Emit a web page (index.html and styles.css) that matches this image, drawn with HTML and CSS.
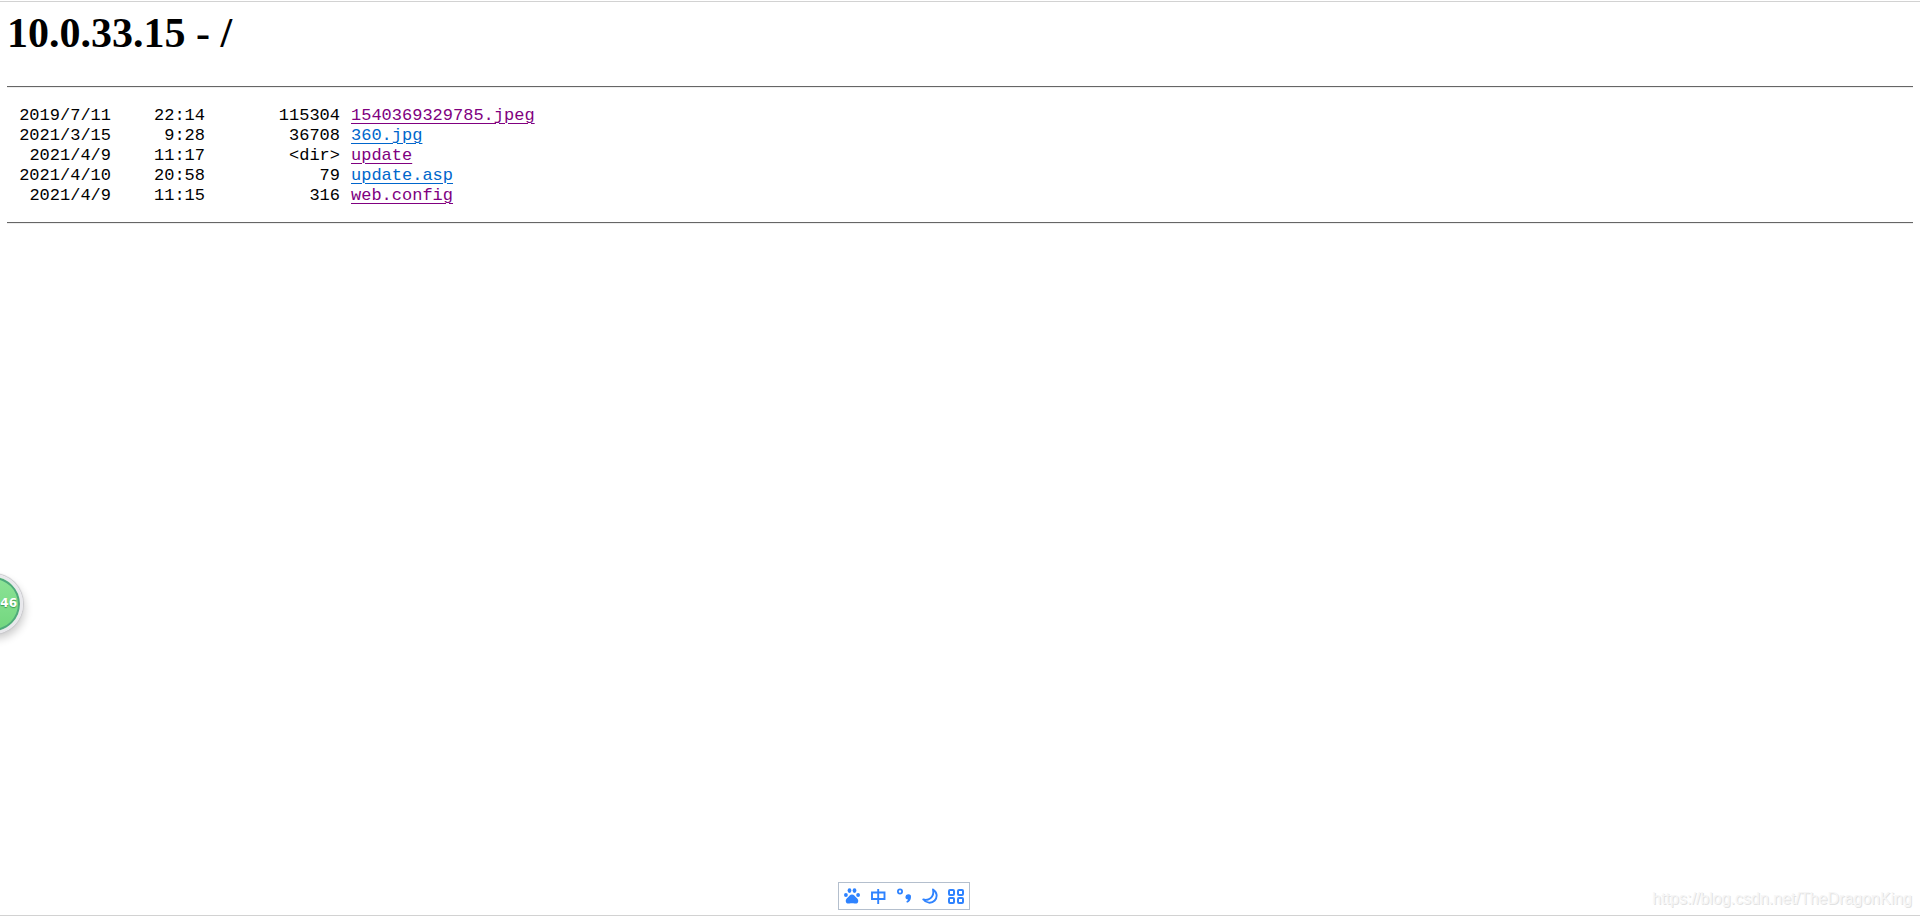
FILE: index.html
```html
<!DOCTYPE html>
<html lang="en">
<head>
<meta charset="utf-8">
<title>10.0.33.15 - /</title>
<link rel="stylesheet" href="styles.css">
</head>
<body>
<main class="listing">
  <h1 class="title">10.0.33.15 - /</h1>
  <hr class="rule">
  <table class="files">
    <tbody>
      <tr><td class="date">2019/7/11</td><td class="time">22:14</td><td class="size">115304</td><td class="name"><a class="visited" href="#jpeg">1540369329785.jpeg</a></td></tr>
      <tr><td class="date">2021/3/15</td><td class="time">9:28</td><td class="size">36708</td><td class="name"><a href="#360">360.jpg</a></td></tr>
      <tr><td class="date">2021/4/9</td><td class="time">11:17</td><td class="size">&lt;dir&gt;</td><td class="name"><a class="visited" href="#update">update</a></td></tr>
      <tr><td class="date">2021/4/10</td><td class="time">20:58</td><td class="size">79</td><td class="name"><a href="#asp">update.asp</a></td></tr>
      <tr><td class="date">2021/4/9</td><td class="time">11:15</td><td class="size">316</td><td class="name"><a class="visited" href="#config">web.config</a></td></tr>
    </tbody>
  </table>
  <hr class="rule">
</main>
<div class="ball">46</div>
<div class="ime">
  <button class="key" aria-label="Input menu"><svg width="16" height="16" viewBox="0 0 16 16" fill="currentColor"><ellipse cx="1.900" cy="7" rx="1.900" ry="2.100"/><ellipse cx="5.500" cy="2.600" rx="1.900" ry="2.400"/><ellipse cx="10.500" cy="2.600" rx="1.900" ry="2.400"/><ellipse cx="14.100" cy="7" rx="1.900" ry="2.100"/><path d="M8 6.600c2 0 2.800 1.600 4.200 3 1.200 1.100 2.300 2 2 3.800-.3 2-2 2.400-3.600 2.100-1.800-.4-3.400-.4-5.200 0-1.600.3-3.300-.1-3.600-2.100-.3-1.800.8-2.700 2-3.800C5.200 8.200 6 6.600 8 6.600z"/></svg></button>
  <button class="key" aria-label="Chinese mode"><svg width="16" height="16" viewBox="0 0 16 16" fill="none" stroke="currentColor" stroke-width="1.900"><path d="M2 4.500h12.500v6.500H2zM8.200 1v15"/></svg></button>
  <button class="key" aria-label="Punctuation"><svg width="16" height="16" viewBox="0 0 16 16"><circle cx="4" cy="3.500" r="2.100" fill="none" stroke="currentColor" stroke-width="1.800"/><path fill="currentColor" d="M12.300 6.200a2.600 2.600 0 0 1 2.700 2.800c0 2.900-1.600 4.900-4 5.700l-.7-1.100c1-.6 1.600-1.200 1.700-2a2.700 2.700 0 0 1 .3-5.400z"/></svg></button>
  <button class="key" aria-label="Half width"><svg width="16" height="16" viewBox="0 0 16 16" fill="none" stroke="currentColor" stroke-width="1.900" stroke-linejoin="round"><path d="M11 1.500C15.200 4 15.700 9.300 12.700 12.500 9.500 15.800 4.300 15.300 1.300 11.500 3 12 5 12 6.500 11.300 10.500 9.500 12 6 11 1.500z"/></svg></button>
  <button class="key" aria-label="Toolbox"><svg width="16" height="16" viewBox="0 0 16 16" fill="none" stroke="currentColor" stroke-width="2"><rect x="1" y="2" width="5" height="5" rx="1"/><rect x="10" y="2" width="5" height="5" rx="1"/><rect x="1" y="10" width="5" height="5" rx="1"/><rect x="10" y="10" width="5" height="5" rx="1"/></svg></button>
</div>
<div class="watermark">https://blog.csdn.net/TheDragonKing</div>
</body>
</html>
```
FILE: styles.css
```css
* {
  box-sizing: border-box;
}

html {
  height: 100%;
  background: #fff;
}

body {
  position: relative;
  margin: 0;
  min-height: 100%;
  overflow: hidden;
  color: #000;
  font-family: "Liberation Serif", "Times New Roman", serif;
}

body::before,
body::after {
  content: "";
  position: absolute;
  left: 0;
  right: 0;
  height: 1px;
  background: #d2d2d2;
}

body::before {
  top: 1px;
}

body::after {
  bottom: 1px;
}

.listing {
  padding: 8px 7px;
}

.title {
  margin: 0 0 28px;
  font-size: 42px;
  line-height: 50px;
}

.rule {
  height: 2px;
  margin: 0;
  border: 0;
  border-top: 1px solid #666;
  border-bottom: 1px solid #eee;
}

.files {
  margin: 18px 0 16px;
  border-collapse: collapse;
  font-family: "Liberation Mono", "Courier New", monospace;
  font-size: 17px;
  line-height: 20px;
}

.files td {
  padding: 0;
  text-align: right;
}

.files .date {
  width: 104px;
}

.files .time {
  width: 94px;
}

.files .size {
  width: 135px;
}

.files .name {
  padding-left: 11px;
  text-align: left;
}

a {
  color: #0066cc;
  text-underline-offset: 3px;
  text-decoration-thickness: 1px;
}

a.visited {
  color: #800080;
}

.ball {
  position: absolute;
  left: -37px;
  top: 574px;
  width: 60px;
  height: 60px;
  padding-right: 3px;
  border: 3px solid #e8e8ec;
  border-radius: 50%;
  background: linear-gradient(#8ce396, #72d67e);
  box-shadow: inset 0 0 0 2px #4fa97c, 0 0 1px 1px #c8c8cc, 2px 5px 8px #0003;
  color: #fff;
  font: bold 12px/52px "DejaVu Sans", sans-serif;
  text-align: right;
  text-shadow: 0 1px 1px #3c9a50;
}

.ime {
  position: absolute;
  left: 838px;
  bottom: 7px;
  display: flex;
  gap: 10px;
  padding: 5px;
  border: 1px solid #b4bfcd;
  background: #fff;
}

.key {
  display: flex;
  padding: 0;
  border: 0;
  background: none;
  color: #2f83ff;
}

.watermark {
  position: absolute;
  right: 8px;
  bottom: 9px;
  color: #f6f6f6;
  font: 16px/18px "Liberation Sans", Arial, sans-serif;
  text-shadow: 1px 1px 0 #e2e2e2;
}
```
